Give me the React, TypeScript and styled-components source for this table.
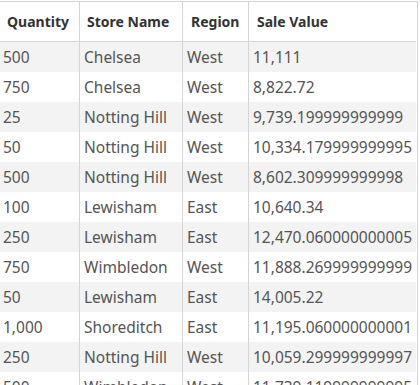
import React from "react";
import styled, { createGlobalStyle } from "styled-components";

const Global = createGlobalStyle`
  html, body { margin: 0; padding: 0; background: #ffffff; }
  body { font-family: "Noto Sans", "Open Sans", sans-serif; }
`;

const Table = styled.div`
  margin-top: 1px;
  width: 417px;
  border-top: 1px solid #d4d4d4;
  border-right: 1px solid #d4d4d4;
  display: grid;
  grid-template-columns: 80px 103px 66px 167px;
`;

const HeadCell = styled.div<{ $last?: boolean; $pad: number }>`
  height: 40px;
  box-sizing: border-box;
  display: flex;
  align-items: center;
  padding-left: ${(p) => p.$pad}px;
  border-bottom: 1px solid #d4d4d4;
  border-right: ${(p) => (p.$last ? "none" : "1px solid #d4d4d4")};
  font-size: 14px;
  font-weight: 700;
  color: #333333;
  white-space: nowrap;
`;

const Cell = styled.div<{ $alt: boolean; $last?: boolean; $pad: number }>`
  height: 30px;
  box-sizing: border-box;
  display: flex;
  align-items: center;
  padding-left: ${(p) => p.$pad}px;
  background: ${(p) => (p.$alt ? "#f3f3f3" : "#ffffff")};
  border-right: ${(p) => (p.$last ? "none" : "1px solid #d4d4d4")};
  font-size: 15.5px;
  color: #555555;
  white-space: nowrap;
  overflow: visible;
`;

const headers = ["Quantity", "Store Name", "Region", "Sale Value"];
const headPad = [7, 7, 8, 8];
const bodyPad = [3, 4, 4, 4];

const rows: string[][] = [
  ["500", "Chelsea", "West", "11,111"],
  ["750", "Chelsea", "West", "8,822.72"],
  ["25", "Notting Hill", "West", "9,739.199999999999"],
  ["50", "Notting Hill", "West", "10,334.179999999995"],
  ["500", "Notting Hill", "West", "8,602.309999999998"],
  ["100", "Lewisham", "East", "10,640.34"],
  ["250", "Lewisham", "East", "12,470.060000000005"],
  ["750", "Wimbledon", "West", "11,888.269999999999"],
  ["50", "Lewisham", "East", "14,005.22"],
  ["1,000", "Shoreditch", "East", "11,195.060000000001"],
  ["250", "Notting Hill", "West", "10,059.299999999997"],
  ["500", "Wimbledon", "West", "11,739.119999999995"],
];

export default function App() {
  return (
    <>
      <Global />
      <Table>
        {headers.map((h, i) => (
          <HeadCell key={h} $pad={headPad[i]} $last={i === 3}>
            {h}
          </HeadCell>
        ))}
        {rows.map((r, ri) =>
          r.map((v, ci) => (
            <Cell key={`${ri}-${ci}`} $alt={ri % 2 === 0} $pad={bodyPad[ci]} $last={ci === 3}>
              {v}
            </Cell>
          ))
        )}
      </Table>
    </>
  );
}
